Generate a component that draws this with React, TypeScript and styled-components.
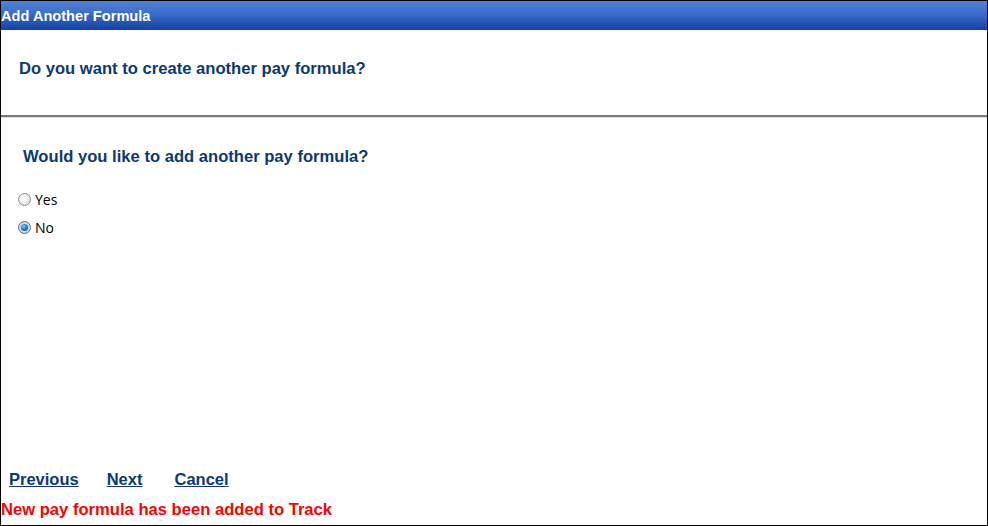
import React, { useState } from 'react';
import styled, { createGlobalStyle } from 'styled-components';

const GlobalStyle = createGlobalStyle`
  html, body {
    margin: 0;
    padding: 0;
    background: #ffffff;
  }
  body {
    font-family: 'Liberation Sans', Arial, sans-serif;
  }
`;

const Frame = styled.div`
  box-sizing: border-box;
  width: 988px;
  height: 526px;
  border: 1px solid #000000;
  display: flex;
  flex-direction: column;
  background: #ffffff;
`;

const TitleBar = styled.div`
  height: 29px;
  display: flex;
  align-items: center;
  background: linear-gradient(to bottom, #5283d8 0%, #3b6cc8 45%, #1241a2 100%);
  color: #ffffff;
  font-weight: 700;
  font-size: 14.6px;
`;

const Header = styled.div`
  height: 87px;
  box-sizing: border-box;
  padding: 30px 0 0 18px;
  border-bottom: 2px solid #7a7a7a;
  box-shadow: 0 1px 0 #dcdcdc;
`;

const Heading = styled.h2<{ indent?: number }>`
  margin: 0;
  padding-left: ${({ indent }) => indent ?? 0}px;
  font-size: 16.6px;
  font-weight: 700;
  color: #0d3970;
  line-height: 18px;
`;

const Body = styled.div`
  flex: 1;
  padding: 31px 0 0 17px;
`;

const Options = styled.div`
  display: flex;
  flex-direction: column;
  gap: 8px;
  margin-top: 23px;
`;

const OptionLabel = styled.label`
  display: flex;
  align-items: center;
  height: 20px;
  font-family: 'Open Sans', 'DejaVu Sans', sans-serif;
  font-size: 14px;
  color: #000000;
  cursor: pointer;
`;

const RadioInput = styled.input`
  appearance: none;
  -webkit-appearance: none;
  box-sizing: border-box;
  width: 13px;
  height: 13px;
  margin: 0 4px 0 0;
  border-radius: 50%;
  border: 1px solid #8e8f8f;
  background: radial-gradient(circle at 40% 35%, #ffffff 0%, #eeeeee 45%, #cfcfcf 100%);
  position: relative;

  &:checked {
    border-color: #5a6c7d;
    background: radial-gradient(circle at 50% 50%, #d8e6f2 0%, #c5d3de 100%);
  }

  &:checked::after {
    content: '';
    position: absolute;
    left: 2px;
    top: 2px;
    width: 7px;
    height: 7px;
    border-radius: 50%;
    background: radial-gradient(circle at 40% 35%, #7fc6ee 0%, #2278bd 50%, #0c3f72 100%);
  }
`;

const Footer = styled.div`
  display: flex;
  flex-direction: column;
  padding-bottom: 6px;
`;

const Nav = styled.div`
  display: flex;
  padding-left: 8px;
  margin-bottom: 12px;
`;

const NavLink = styled.a<{ space?: number }>`
  margin-left: ${({ space }) => space ?? 0}px;
  font-size: 16.5px;
  font-weight: 700;
  color: #0d3970;
  text-decoration: underline;
  cursor: pointer;
  line-height: 20px;
`;

const Message = styled.div`
  font-size: 16.6px;
  font-weight: 700;
  color: #ff0000;
  line-height: 18px;
`;

const App: React.FC = () => {
  const [choice, setChoice] = useState('no');

  return (
    <>
      <GlobalStyle />
      <Frame>
        <TitleBar>Add Another Formula</TitleBar>
        <Header>
          <Heading>Do you want to create another pay formula?</Heading>
        </Header>
        <Body>
          <Heading indent={5}>Would you like to add another pay formula?</Heading>
          <Options>
            {[
              { value: 'yes', text: 'Yes' },
              { value: 'no', text: 'No' },
            ].map((option) => (
              <OptionLabel key={option.value}>
                <RadioInput
                  type="radio"
                  name="another"
                  value={option.value}
                  checked={choice === option.value}
                  onChange={() => setChoice(option.value)}
                />
                {option.text}
              </OptionLabel>
            ))}
          </Options>
        </Body>
        <Footer>
          <Nav>
            <NavLink>Previous</NavLink>
            <NavLink space={28}>Next</NavLink>
            <NavLink space={32}>Cancel</NavLink>
          </Nav>
          <Message>New pay formula has been added to Track</Message>
        </Footer>
      </Frame>
    </>
  );
};

export default App;
